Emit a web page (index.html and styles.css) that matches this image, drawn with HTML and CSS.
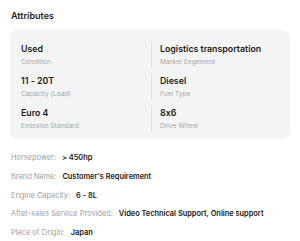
FILE: index.html
```html
<!DOCTYPE html>
<html>
<head>
<meta charset="utf-8">
<link rel="stylesheet" href="styles.css">
</head>
<body>
<div class="page">
  <h2 class="title">Attributes</h2>
  <div class="card">
    <div class="item"><div class="val">Used</div><div class="lab">Condition</div></div>
    <div class="item right"><div class="val">Logistics transportation</div><div class="lab">Market Segement</div></div>
    <div class="item"><div class="val">11 - 20T</div><div class="lab">Capacity (Load)</div></div>
    <div class="item right"><div class="val">Diesel</div><div class="lab">Fuel Type</div></div>
    <div class="item"><div class="val">Euro 4</div><div class="lab">Emission Standard</div></div>
    <div class="item right"><div class="val">8x6</div><div class="lab">Drive Wheel</div></div>
  </div>
  <div class="list">
    <div class="row"><span class="k">Horsepower:</span><span class="v">&gt; 450hp</span></div>
    <div class="row"><span class="k">Brand Name:</span><span class="v">Customer's Requirement</span></div>
    <div class="row"><span class="k">Engine Capacity:</span><span class="v">6 - 8L</span></div>
    <div class="row"><span class="k">After-sales Service Provided:</span><span class="v">Video Technical Support, Online support</span></div>
    <div class="row"><span class="k">Place of Origin:</span><span class="v">Japan</span></div>
  </div>
</div>
</body>
</html>
```
FILE: styles.css
```css
* { box-sizing: border-box; margin: 0; padding: 0; }
body { background: #fff; font-family: Inter, "Liberation Sans", sans-serif; color: #222; font-feature-settings: "calt" 0; }
.page { padding: 9px 10px 0 10px; width: 300px; }
.title { font-size: 9px; font-weight: 600; line-height: 13px; padding-left: 1px; margin-bottom: 8px; color: #222; }
.card { background: #f4f4f4; border-radius: 7px; padding: 12px 11px 7px 11px; display: grid; grid-template-columns: 130px 1fr; row-gap: 6px; width: 280px; }
.item { display: flex; flex-direction: column; }
.item.right { border-left: 1px solid #e2e2e2; padding-left: 8px; }
.val { font-size: 8.8px; font-weight: 600; line-height: 13px; color: #1a1a1a; }
.lab { font-size: 6.6px; line-height: 11px; margin-top: 2px; color: #a8a8a8; }
.list { display: flex; flex-direction: column; gap: 6.8px; margin-top: 13px; padding-left: 1px; }
.row { font-size: 7.4px; line-height: 12px; display: flex; gap: 6px; }
.k { color: #a0a0a0; }
.v { color: #1a1a1a; font-weight: 600; }
```
